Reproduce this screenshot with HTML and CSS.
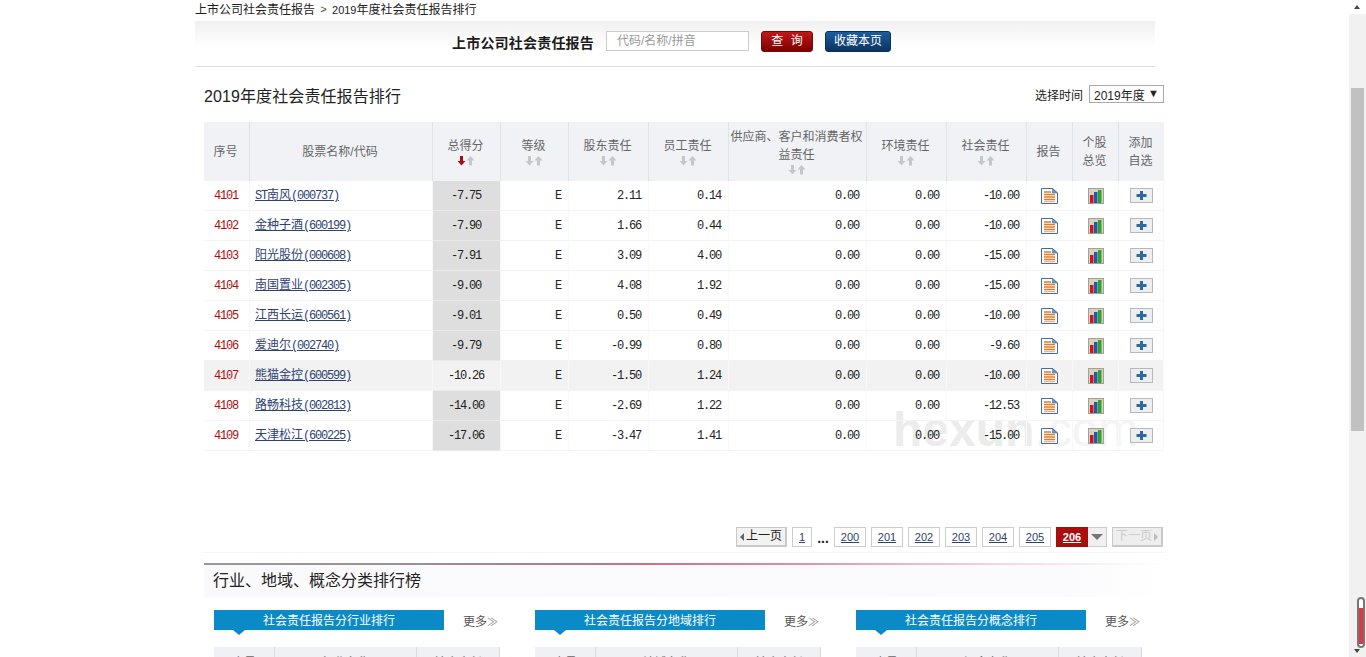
FILE: index.html
```html
<!DOCTYPE html>
<html lang="zh-CN">
<head>
<meta charset="utf-8">
<title>2019年度社会责任报告排行</title>
<link rel="stylesheet" href="styles.css">
</head>
<body>
<svg class="defs" width="0" height="0" aria-hidden="true">
  <symbol id="sort" viewBox="0 0 20 11">
    <path d="M4 1h3v5h2.500L5.500 10.500 1.500 6H4z" fill="#c4c8cc"/>
    <path d="M13 10.500h3v-5h2.500L14.500 1l-4 4.500H13z" fill="#c4c8cc"/>
  </symbol>
  <symbol id="sort-active" viewBox="0 0 20 11">
    <path d="M4 1h3v5h2.500L5.500 10.500 1.500 6H4z" fill="#a50f0f"/>
    <path d="M13 10.500h3v-5h2.500L14.500 1l-4 4.500H13z" fill="#c4c8cc"/>
  </symbol>
  <symbol id="doc" viewBox="0 0 17 16">
    <path d="M.5.500h11l5 4.500v10.500H.5z" fill="#fff" stroke="#3f6f9f"/>
    <path d="M11.500.500v4.500h5z" fill="#5b9bd5" stroke="#3f6f9f" stroke-width=".6"/>
    <path d="M3 4h7M3 6.500h11M3 9h11M3 11.500h11" stroke="#e8792b" stroke-width="1.300"/>
    <path d="M3 13.700h11" stroke="#e9a06b"/>
  </symbol>
  <symbol id="chart" viewBox="0 0 16 16">
    <rect x=".5" y=".5" width="15" height="15" fill="#d8d2c4" stroke="#a59f94"/>
    <rect x="2" y="7" width="3.500" height="8" fill="#d4121e"/>
    <rect x="6" y="4" width="3.500" height="11" fill="#1c5fa8"/>
    <rect x="10" y="2" width="3.500" height="13" fill="#2fa12f"/>
  </symbol>
  <symbol id="plus" viewBox="0 0 23 15">
    <rect x=".5" y=".5" width="22" height="14" fill="#eceef0" stroke="#b5b9bd"/>
    <path d="M10 3h3v3h3.500v3H13v3h-3V9H6.500V6H10z" fill="#2f6a9e"/>
  </symbol>
</svg>
<div class="page">
  <div class="main">
    <div class="crumbs"><span>上市公司社会责任报告</span><span class="crumb-sep">&gt;</span><span><span class="crumb-year">2019</span>年度社会责任报告排行</span></div>
    <div class="search-band">
      <strong class="search-title">上市公司社会责任报告</strong>
      <div class="search-input">代码/名称/拼音</div>
      <div class="btn btn-red">查 询</div>
      <div class="btn btn-blue">收藏本页</div>
    </div>
    <section class="content">
      <div class="title-row">
        <h1 class="title">2019年度社会责任报告排行</h1>
        <div class="time-pick"><span class="time-label">选择时间</span><div class="select"><span>2019年度</span><span class="select-arrow">▼</span></div></div>
      </div>
      <div class="table-area">
        <div class="watermark"><b>hexun</b><span class="wm-com">.com</span></div>
        <table class="rank">
          <colgroup>
            <col class="c46"><col class="c183"><col class="c68"><col class="c68"><col class="c80"><col class="c80"><col class="c138"><col class="c80"><col class="c80"><col class="c46"><col class="c46"><col class="c45">
          </colgroup>
          <thead>
            <tr>
              <th>序号</th>
              <th>股票名称/代码</th>
              <th>总得分<svg class="sort"><use href="#sort-active"/></svg></th>
              <th>等级<svg class="sort"><use href="#sort"/></svg></th>
              <th>股东责任<svg class="sort"><use href="#sort"/></svg></th>
              <th>员工责任<svg class="sort"><use href="#sort"/></svg></th>
              <th>供应商、客户和消费者权益责任<svg class="sort"><use href="#sort"/></svg></th>
              <th>环境责任<svg class="sort"><use href="#sort"/></svg></th>
              <th>社会责任<svg class="sort"><use href="#sort"/></svg></th>
              <th>报告</th>
              <th>个股<br>总览</th>
              <th>添加<br>自选</th>
            </tr>
          </thead>
          <tbody>
            <tr><td class="no">4101</td><td class="name"><a href="#"><span class="m">ST</span>南风<span class="m">(000737)</span></a></td><td class="total m">-7.75</td><td class="grade m">E</td><td class="num m">2.11</td><td class="num m">0.14</td><td class="num m">0.00</td><td class="num m">0.00</td><td class="num m">-10.00</td><td class="ic"><svg class="i-doc"><use href="#doc"/></svg></td><td class="ic"><svg class="i-chart"><use href="#chart"/></svg></td><td class="ic"><svg class="i-plus"><use href="#plus"/></svg></td></tr>
            <tr><td class="no">4102</td><td class="name"><a href="#">金种子酒<span class="m">(600199)</span></a></td><td class="total m">-7.90</td><td class="grade m">E</td><td class="num m">1.66</td><td class="num m">0.44</td><td class="num m">0.00</td><td class="num m">0.00</td><td class="num m">-10.00</td><td class="ic"><svg class="i-doc"><use href="#doc"/></svg></td><td class="ic"><svg class="i-chart"><use href="#chart"/></svg></td><td class="ic"><svg class="i-plus"><use href="#plus"/></svg></td></tr>
            <tr><td class="no">4103</td><td class="name"><a href="#">阳光股份<span class="m">(000608)</span></a></td><td class="total m">-7.91</td><td class="grade m">E</td><td class="num m">3.09</td><td class="num m">4.00</td><td class="num m">0.00</td><td class="num m">0.00</td><td class="num m">-15.00</td><td class="ic"><svg class="i-doc"><use href="#doc"/></svg></td><td class="ic"><svg class="i-chart"><use href="#chart"/></svg></td><td class="ic"><svg class="i-plus"><use href="#plus"/></svg></td></tr>
            <tr><td class="no">4104</td><td class="name"><a href="#">南国置业<span class="m">(002305)</span></a></td><td class="total m">-9.00</td><td class="grade m">E</td><td class="num m">4.08</td><td class="num m">1.92</td><td class="num m">0.00</td><td class="num m">0.00</td><td class="num m">-15.00</td><td class="ic"><svg class="i-doc"><use href="#doc"/></svg></td><td class="ic"><svg class="i-chart"><use href="#chart"/></svg></td><td class="ic"><svg class="i-plus"><use href="#plus"/></svg></td></tr>
            <tr><td class="no">4105</td><td class="name"><a href="#">江西长运<span class="m">(600561)</span></a></td><td class="total m">-9.01</td><td class="grade m">E</td><td class="num m">0.50</td><td class="num m">0.49</td><td class="num m">0.00</td><td class="num m">0.00</td><td class="num m">-10.00</td><td class="ic"><svg class="i-doc"><use href="#doc"/></svg></td><td class="ic"><svg class="i-chart"><use href="#chart"/></svg></td><td class="ic"><svg class="i-plus"><use href="#plus"/></svg></td></tr>
            <tr><td class="no">4106</td><td class="name"><a href="#">爱迪尔<span class="m">(002740)</span></a></td><td class="total m">-9.79</td><td class="grade m">E</td><td class="num m">-0.99</td><td class="num m">0.80</td><td class="num m">0.00</td><td class="num m">0.00</td><td class="num m">-9.60</td><td class="ic"><svg class="i-doc"><use href="#doc"/></svg></td><td class="ic"><svg class="i-chart"><use href="#chart"/></svg></td><td class="ic"><svg class="i-plus"><use href="#plus"/></svg></td></tr>
            <tr class="hl"><td class="no">4107</td><td class="name"><a href="#">熊猫金控<span class="m">(600599)</span></a></td><td class="total m">-10.26</td><td class="grade m">E</td><td class="num m">-1.50</td><td class="num m">1.24</td><td class="num m">0.00</td><td class="num m">0.00</td><td class="num m">-10.00</td><td class="ic"><svg class="i-doc"><use href="#doc"/></svg></td><td class="ic"><svg class="i-chart"><use href="#chart"/></svg></td><td class="ic"><svg class="i-plus"><use href="#plus"/></svg></td></tr>
            <tr><td class="no">4108</td><td class="name"><a href="#">路畅科技<span class="m">(002813)</span></a></td><td class="total m">-14.00</td><td class="grade m">E</td><td class="num m">-2.69</td><td class="num m">1.22</td><td class="num m">0.00</td><td class="num m">0.00</td><td class="num m">-12.53</td><td class="ic"><svg class="i-doc"><use href="#doc"/></svg></td><td class="ic"><svg class="i-chart"><use href="#chart"/></svg></td><td class="ic"><svg class="i-plus"><use href="#plus"/></svg></td></tr>
            <tr><td class="no">4109</td><td class="name"><a href="#">天津松江<span class="m">(600225)</span></a></td><td class="total m">-17.06</td><td class="grade m">E</td><td class="num m">-3.47</td><td class="num m">1.41</td><td class="num m">0.00</td><td class="num m">0.00</td><td class="num m">-15.00</td><td class="ic"><svg class="i-doc"><use href="#doc"/></svg></td><td class="ic"><svg class="i-chart"><use href="#chart"/></svg></td><td class="ic"><svg class="i-plus"><use href="#plus"/></svg></td></tr>
          </tbody>
        </table>
      </div>
      <nav class="pager">
        <span class="pg pg-nav"><i class="tri-l"></i>上一页</span>
        <a class="pg pg-one" href="#">1</a>
        <span class="pg-dots">...</span>
        <a class="pg" href="#">200</a>
        <a class="pg" href="#">201</a>
        <a class="pg" href="#">202</a>
        <a class="pg" href="#">203</a>
        <a class="pg" href="#">204</a>
        <a class="pg" href="#">205</a>
        <div class="pg-current"><a class="pg pg-on" href="#">206</a><span class="pg-drop"><i class="tri-d"></i></span></div>
        <span class="pg pg-nav pg-off">下一页<i class="tri-r"></i></span>
      </nav>
      <div class="rule"></div>
      <h2 class="band-title">行业、地域、概念分类排行榜</h2>
      <div class="tri-cols">
        <div class="col">
          <div class="tab-row"><div class="tab">社会责任报告分行业排行</div><a class="more" href="#">更多<span class="more-sign">≫</span></a></div>
          <div class="mini-head"><span class="mh1">序号</span><span class="mh2">行业名称</span><span class="mh3">社会责任</span></div>
        </div>
        <div class="col">
          <div class="tab-row"><div class="tab">社会责任报告分地域排行</div><a class="more" href="#">更多<span class="more-sign">≫</span></a></div>
          <div class="mini-head"><span class="mh1">序号</span><span class="mh2">地域名称</span><span class="mh3">社会责任</span></div>
        </div>
        <div class="col">
          <div class="tab-row"><div class="tab">社会责任报告分概念排行</div><a class="more" href="#">更多<span class="more-sign">≫</span></a></div>
          <div class="mini-head"><span class="mh1">序号</span><span class="mh2">概念名称</span><span class="mh3">社会责任</span></div>
        </div>
      </div>
    </section>
  </div>
  <aside class="scrollbar">
    <div class="sb-up"></div>
    <div class="sb-thumb"></div>
    <div class="thermo"><div class="thermo-fill"></div></div>
    <div class="sb-down"></div>
  </aside>
</div>
</body>
</html>
```
FILE: styles.css
```css
* { box-sizing: border-box; }
html, body { margin: 0; padding: 0; height: 657px; overflow: hidden; background: #fff; }
body { font: 12px/18px "Liberation Sans", "Noto Sans CJK SC", sans-serif; color: #222; }
.defs { position: absolute; }
a { color: #2e4272; }
.page { display: flex; height: 657px; overflow: hidden; }
.main { width: 1349px; padding-left: 195px; }
.scrollbar { width: 17px; background: #f1f1f1; position: relative; display: flex; flex-direction: column; align-items: center; }

.crumbs { height: 21px; line-height: 20px; display: flex; color: #222; }
.crumb-sep { width: 17px; text-align: center; font-family: "Liberation Mono", monospace; font-size: 11px; color: #444; }
.crumb-year { font-size: 11px; }

.search-band { width: 960px; height: 46px; padding: 10px 0 0 257px; display: flex; align-items: flex-start; border-bottom: 1px solid #dedede; background: linear-gradient(#f1f1f1, #fff 60%); }
.search-title { width: 154px; font-size: 14px; line-height: 24px; letter-spacing: .2px; color: #1c1c1c; }
.search-input { width: 143px; height: 20px; padding-left: 10px; line-height: 18px; color: #999; border: 1px solid #ccc; background: #fff; }
.btn { height: 21px; line-height: 19px; text-align: center; color: #fff; border-radius: 3px; }
.btn-red { width: 52px; margin-left: 12px; border: 1px solid #6e0a0a; background: linear-gradient(#c01818, #7d0000); word-spacing: 4px; }
.btn-blue { width: 66px; margin-left: 12px; border: 1px solid #0c2f57; background: linear-gradient(#1d5d9c, #0c345f); }

.content { width: 960px; margin-left: 9px; }
.title-row { height: 55px; display: flex; justify-content: space-between; align-items: flex-start; padding-top: 18px; }
.title { margin: 0; font-size: 16px; font-weight: normal; line-height: 24px; letter-spacing: .1px; color: #222; }
.time-pick { display: flex; align-items: flex-start; gap: 6px; color: #222; }
.time-label { line-height: 22px; }
.select { width: 75px; height: 18px; border: 1px solid #aaa; display: flex; justify-content: space-between; padding: 0 4px; line-height: 20px; }
.select-arrow { font-size: 11px; line-height: 14px; }

.table-area { position: relative; height: 329px; }
.watermark { position: absolute; left: 689px; top: 278px; font-size: 48px; line-height: 60px; color: #ececec; white-space: nowrap; }
.wm-com { color: #f4f4f4; }
.rank { position: relative; width: 960px; table-layout: fixed; border-collapse: separate; border-spacing: 0; }
.c45 { width: 45px; } .c183 { width: 183px; } .c68 { width: 68px; } .c80 { width: 80px; } .c138 { width: 138px; } .c46 { width: 46px; }
.rank th { height: 59px; padding: 0 2px 0 0; font-weight: normal; color: #666; background: #f0f2f6; border-right: 1px solid #dfe2e6; line-height: 18px; vertical-align: middle; }
.rank th:last-child { border-right: 0; }
.sort { display: block; width: 20px; height: 11px; margin: 0 auto; }
.rank td { height: 30px; padding: 0 7px 0 0; border-bottom: 1px solid #f3f3f3; border-right: 1px solid #f8f8f8; vertical-align: middle; }
.rank tr.hl td { background: #f2f2f2; }
.m { font-family: "Liberation Mono", monospace; letter-spacing: -1.2px; }
.rank td.no { padding: 0 1px 0 0; text-align: center; color: #b00d0d; font-family: "Liberation Mono", monospace; letter-spacing: -1.2px; }
.rank td.name { padding-left: 5px; }
.rank td.total { padding: 0 1px 0 0; text-align: center; background: #dedede; border-bottom-color: #eaeaea; color: #222; }
.rank tr.hl td.total { background: #f2f2f2; }
.rank td.num { text-align: right; color: #222; }
.rank td.grade { text-align: right; color: #222; padding-right: 7px; }
.rank td.ic { padding: 0; }
.ic svg { display: block; margin: 0 auto; }
.i-doc { width: 17px; height: 16px; }
.i-chart { width: 16px; height: 16px; }
.i-plus { width: 23px; height: 15px; }

.pager { margin-top: 76px; height: 26px; padding-bottom: 5px; display: flex; gap: 5px; justify-content: flex-end; padding-right: 1px; border-bottom: 1px solid #f6f6f6; font-size: 11px; }
.pg { width: 32px; height: 20px; line-height: 18px; border: 1px solid #ccc; text-align: center; display: block; }
.pg-nav { width: 51px; font-size: 12px; color: #222; background: #f2f2f2; border-color: #c9c9c9; border-bottom-width: 2px; border-right-width: 2px; display: flex; align-items: center; justify-content: center; gap: 2px; line-height: 15px; }
.pg-one { width: 20px; }
.pg-dots { width: 12px; text-align: center; font-weight: bold; font-size: 14px; line-height: 22px; color: #222; }
.pg-current { display: flex; }
.pg-on { background: #a90d0d; border-color: #a90d0d; color: #fff; font-weight: bold; }
.pg-drop { width: 19px; height: 20px; background: #f0f0f0; border: 1px solid #ccc; border-left: 0; display: flex; align-items: center; justify-content: center; }
.pg-off { color: #ccc; background: #eee; }
.tri-l, .tri-r, .tri-d { display: block; width: 0; height: 0; border-style: solid; border-color: transparent; }
.tri-l { border-width: 4px 4px 4px 0; border-right-color: #666; }
.tri-r { border-width: 4px 0 4px 4px; border-left-color: #bbb; }
.tri-d { border-width: 6px 6px 0 6px; border-top-color: #777; }

.rule { margin-top: 10px; height: 2px; background: linear-gradient(90deg, #999, #a08a92 28%, #c8707f 45%, #e08a9a 60%, #f5d5da 82%, #fff); }
.band-title { margin: 0; height: 32px; padding-left: 9px; font-size: 16px; font-weight: normal; line-height: 32px; color: #222; background: linear-gradient(90deg, #fafafc, #fbfbfd 90%, #fff); }
.tri-cols { display: flex; gap: 35px; padding: 13px 0 0 10px; }
.col { width: 286px; }
.tab-row { display: flex; align-items: flex-start; height: 20px; }
.tab { position: relative; width: 230px; height: 20px; line-height: 22px; text-align: center; color: #fff; background: #0a8ac6; }
.tab::after { content: ""; position: absolute; left: 19px; top: 20px; border-style: solid; border-width: 5px 6px 0 6px; border-color: #0a8ac6 transparent transparent; }
.more { margin-left: 19px; color: #555; text-decoration: none; white-space: nowrap; line-height: 24px; height: 20px; }
.more-sign { color: #888; font-size: 11px; }
.mini-head { margin-top: 17px; display: flex; height: 30px; background: #f0f1f5; color: #666; line-height: 32px; text-align: center; }
.mini-head span { display: block; border-right: 1px solid #d9dbe0; }
.mh1 { width: 61px; }
.mh2 { width: 142px; }
.mh3 { width: 83px; }

.sb-up { width: 17px; height: 14px; flex: none; position: relative; background: #fff; }
.sb-up::after { content: ""; position: absolute; left: 5px; top: 5px; border-style: solid; border-width: 0 3.5px 4px; border-color: transparent transparent #444; }
.sb-thumb { width: 13px; height: 343px; margin-top: 74px; background: #c1c1c1; flex: none; }
.thermo { position: absolute; left: 8px; top: 597px; width: 8px; height: 51px; border: 2px solid #777; border-radius: 4px; padding-top: 9px; background: #fff; }
.thermo-fill { width: 4px; height: 36px; background: #d83a45; }
.sb-down { position: absolute; left: 5px; top: 649px; border-style: solid; border-width: 4px 3.5px 0; border-color: #444 transparent transparent; }
```
